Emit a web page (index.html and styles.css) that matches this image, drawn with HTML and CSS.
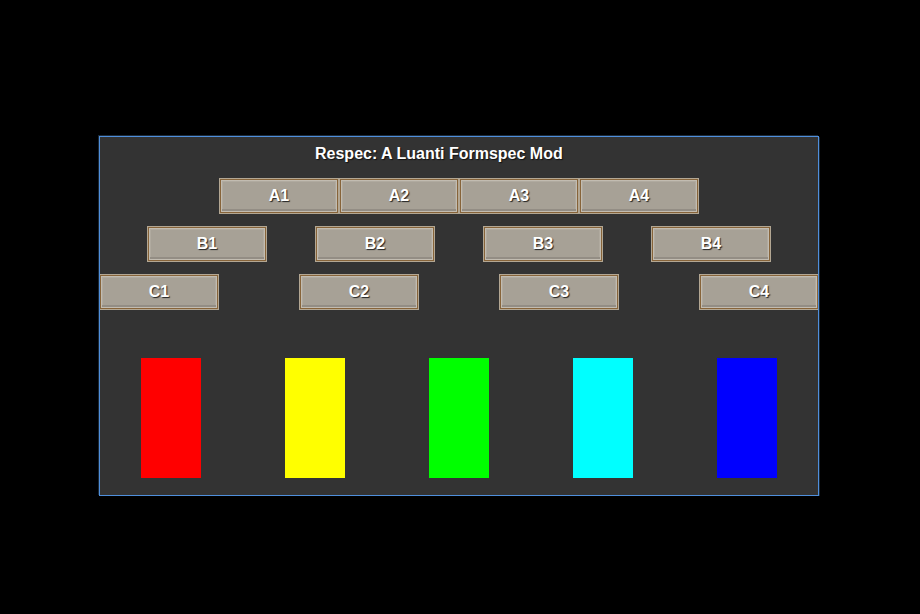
FILE: index.html
```html
<!DOCTYPE html>
<html lang="en">
<head>
  <meta charset="UTF-8" />
  <meta name="viewport" content="width=device-width, initial-scale=1.0"/>
  <title>Respec</title>
  <link rel="stylesheet" href="styles.css">
</head>
<body>
  <div class="formspec">
    <div class="title">Respec: A Luanti Formspec Mod</div>

    <div class="row row-a">
      <button class="btn">A1</button>
      <button class="btn">A2</button>
      <button class="btn">A3</button>
      <button class="btn">A4</button>
    </div>

    <div class="row row-b">
      <button class="btn">B1</button>
      <button class="btn">B2</button>
      <button class="btn">B3</button>
      <button class="btn">B4</button>
    </div>

    <div class="row row-c">
      <button class="btn">C1</button>
      <button class="btn">C2</button>
      <button class="btn">C3</button>
      <button class="btn">C4</button>
    </div>

    <div class="swatches">
      <div class="swatch red"></div>
      <div class="swatch yellow"></div>
      <div class="swatch green"></div>
      <div class="swatch cyan"></div>
      <div class="swatch blue"></div>
    </div>
  </div>
</body>
</html>
```

FILE: styles.css
```css
body {
  margin: 0;
  background: #000;
  font-family: 'Liberation Sans', Arial, sans-serif;
}

/* outline drawn over the children, like the formspec frame */
.formspec {
  box-sizing: border-box;
  width: 720px;
  height: 360px;
  margin: 136px 0 0 99px;
  background: #333333;
  outline: 1px solid #4f8fdc;
  outline-offset: -1px;
  box-shadow: -1px -1px 0 #1c2a38, 1px 1px 0 #1c2a38;
}

.title {
  padding: 9px 0 0 216px;
  margin-bottom: 15px;
  line-height: 18px;
  font-size: 16px;
  font-weight: bold;
  color: #fff;
  text-shadow: 1px 1px 1px #111;
}

.row {
  display: flex;
  height: 36px;
  margin-bottom: 12px;
}

.row-a { justify-content: center; }
.row-b { justify-content: space-evenly; }
.row-c { justify-content: space-between; margin-bottom: 48px; }

.btn {
  box-sizing: border-box;
  width: 120px;
  height: 36px;
  padding: 0;
  background: #a7a196;
  border: 1px solid #b3a793;
  box-shadow: inset 0 0 0 1px #87643a, inset 0 0 0 2px #c2bcb1, inset 0 -4px 0 #938d84, inset 0 0 0 3px #b0aa9f;
  font-family: 'Liberation Sans', Arial, sans-serif;
  font-size: 16px;
  font-weight: bold;
  color: #fff;
  text-shadow: 1px 1px 1px #222;
}

.swatches {
  display: flex;
  justify-content: space-around;
}

.swatch {
  width: 60px;
  height: 120px;
}

.red { background: #ff0000; }
.yellow { background: #ffff00; }
.green { background: #00ff00; }
.cyan { background: #00ffff; }
.blue { background: #0000ff; }
```
